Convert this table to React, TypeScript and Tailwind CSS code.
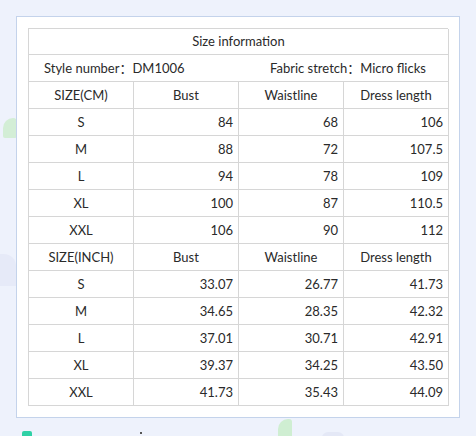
import React from "react";

type Row = [string, string, string, string];

const cmRows: Row[] = [
  ["S", "84", "68", "106"],
  ["M", "88", "72", "107.5"],
  ["L", "94", "78", "109"],
  ["XL", "100", "87", "110.5"],
  ["XXL", "106", "90", "112"],
];

const inchRows: Row[] = [
  ["S", "33.07", "26.77", "41.73"],
  ["M", "34.65", "28.35", "42.32"],
  ["L", "37.01", "30.71", "42.91"],
  ["XL", "39.37", "34.25", "43.50"],
  ["XXL", "41.73", "35.43", "44.09"],
];

const cell = "h-[27px] border-r border-b border-[#d6d6d6] flex items-center";

const HeaderRow = ({ label }: { label: string }) => (
  <>
    <div className={`${cell} justify-center`}>{label}</div>
    <div className={`${cell} justify-center`}>Bust</div>
    <div className={`${cell} justify-center`}>Waistline</div>
    <div className={`${cell} justify-center`}>Dress length</div>
  </>
);

const DataRow = ({ row }: { row: Row }) => (
  <>
    <div className={`${cell} justify-center`}>{row[0]}</div>
    <div className={`${cell} justify-end pr-[5px]`}>{row[1]}</div>
    <div className={`${cell} justify-end pr-[5px]`}>{row[2]}</div>
    <div className={`${cell} justify-end pr-[5px]`}>{row[3]}</div>
  </>
);

export default function App() {
  return (
    <div
      className="relative w-[476px] h-[436px] overflow-hidden bg-[#eef2fc] pt-4 pl-4"
      style={{ fontFamily: 'Lato, "Noto Sans CJK SC", sans-serif' }}
    >
      {/* background bits peeking out round the card */}
      <div className="absolute left-[3px] top-[118px] w-[14px] h-[20px] bg-[#d3eed6] rounded-tl-[10px] rounded-tr-[4px] rounded-b-[2px]" />
      <div className="absolute left-0 top-[254px] w-[16px] h-[32px] bg-[#e6eaf8] rounded-tr-[12px]" />
      <div className="absolute left-[22px] top-[431px] w-[10px] h-[6px] bg-[#2fd1a6] rounded-t-[2px]" />
      <div className="absolute left-[140px] top-[432px] w-[2px] h-[2px] bg-[#555]" />
      <div className="absolute left-[278px] top-[419px] w-[14px] h-[17px] bg-[#cfeed2] rounded-tl-[10px] rounded-tr-[3px]" />
      <div className="absolute left-[322px] top-[432px] w-[22px] h-[6px] bg-[#e4e8f6] rounded-t-full" />

      <div className="relative w-[444px] h-[402px] bg-white border border-[#c4d3eb] p-[11px]">
        <div className="grid grid-cols-[105px_105px_105px_105px] border-l border-t border-[#d6d6d6] text-[13px] leading-none text-[#2a2a2a]">
          <div className="col-span-4 h-[26px] border-r border-b border-[#d6d6d6] flex items-center justify-center">
            Size information
          </div>
          <div className={`${cell} col-span-4`}>
            <span className="w-[241px] pl-[15px]">Style number：DM1006</span>
            <span>Fabric stretch：Micro flicks</span>
          </div>
          <HeaderRow label="SIZE(CM)" />
          {cmRows.map((r) => (
            <DataRow key={"cm" + r[0]} row={r} />
          ))}
          <HeaderRow label="SIZE(INCH)" />
          {inchRows.map((r) => (
            <DataRow key={"in" + r[0]} row={r} />
          ))}
        </div>
      </div>
    </div>
  );
}
